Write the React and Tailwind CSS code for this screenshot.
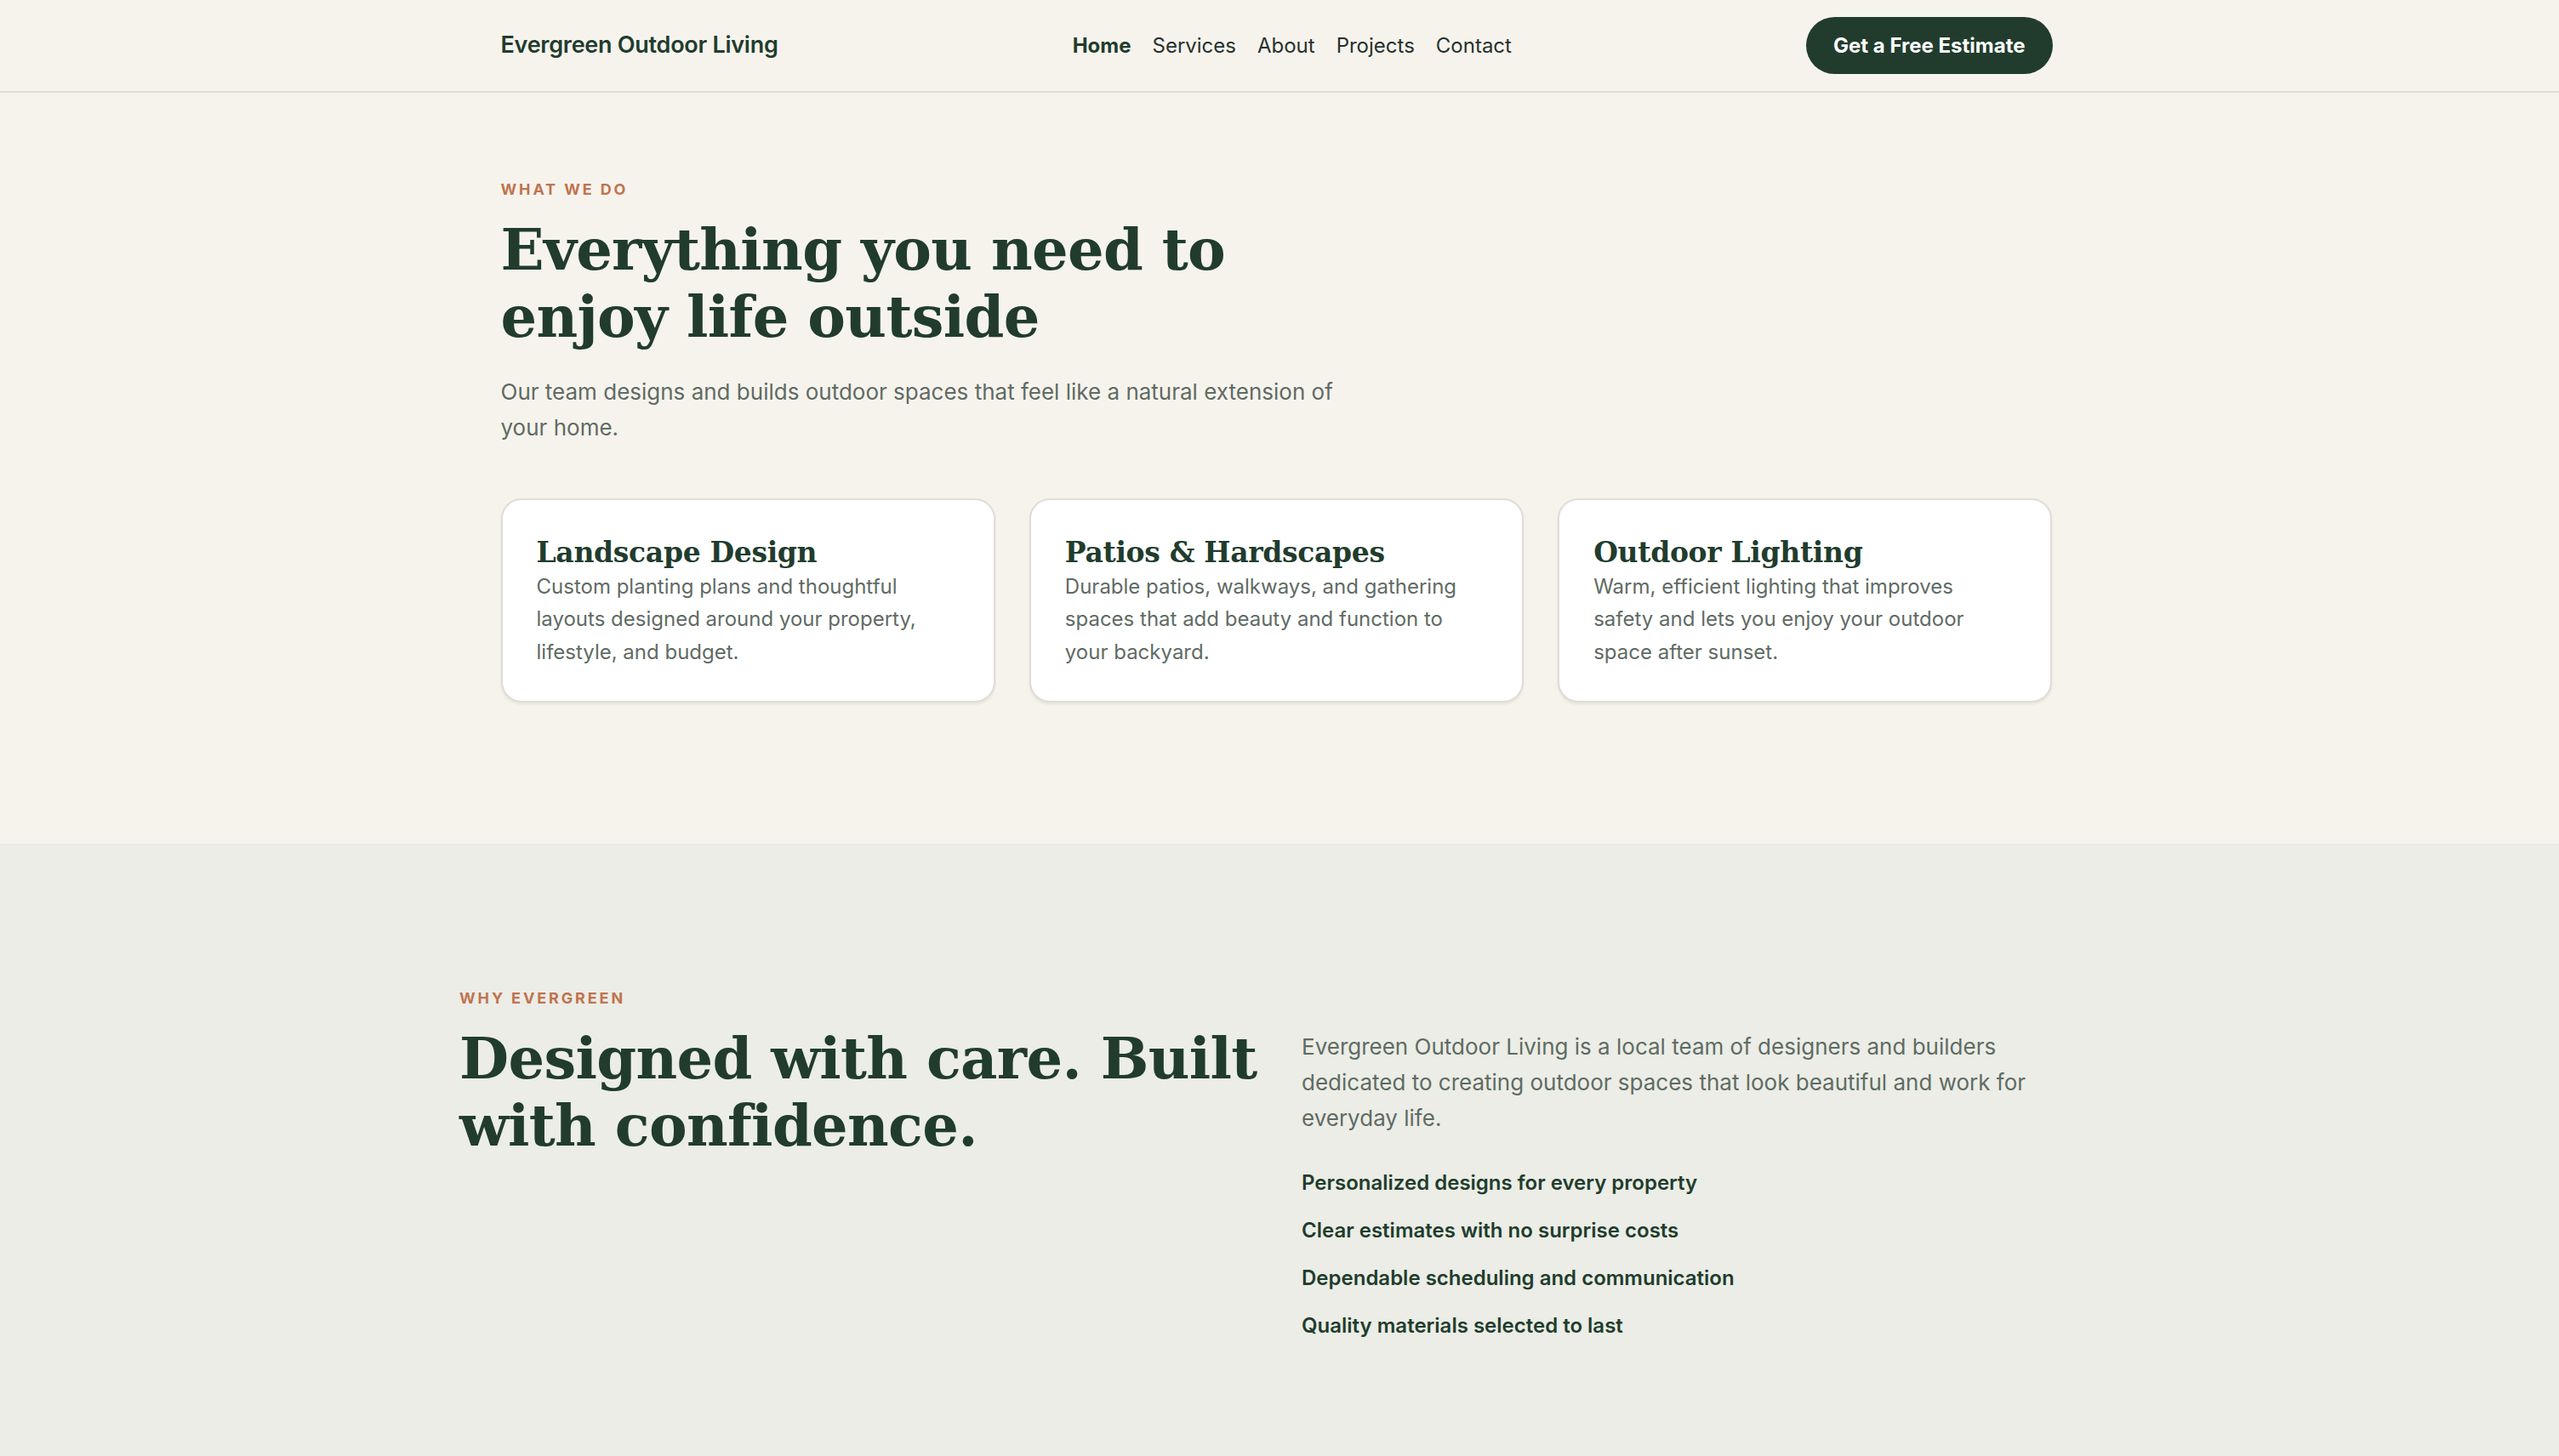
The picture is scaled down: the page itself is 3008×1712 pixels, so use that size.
import React from 'react';

const services = [
  {
    title: 'Landscape Design',
    text: 'Custom planting plans and thoughtful layouts designed around your property, lifestyle, and budget.',
  },
  {
    title: 'Patios & Hardscapes',
    text: 'Durable patios, walkways, and gathering spaces that add beauty and function to your backyard.',
  },
  {
    title: 'Outdoor Lighting',
    text: 'Warm, efficient lighting that improves safety and lets you enjoy your outdoor space after sunset.',
  },
];

const reasons = [
  'Personalized designs for every property',
  'Clear estimates with no surprise costs',
  'Dependable scheduling and communication',
  'Quality materials selected to last',
];

const navLinks = ['Home', 'Services', 'About', 'Projects', 'Contact'];

const serif = "font-['DejaVu_Serif',Georgia,serif]";

function Eyebrow({ children }) {
  return (
    <p className="text-[18px] leading-[27px] font-bold tracking-[0.16em] uppercase text-[#c0734f]">
      {children}
    </p>
  );
}

export default function App() {
  return (
    <div className="min-h-screen bg-[#f6f3ed] text-[#213c2d] font-['Inter','Liberation_Sans',sans-serif]">
      {/* Top navigation */}
      <header className="border-b-2 border-[#e0ddd6] bg-[#f6f3ed]">
        <div className="max-w-[1831px] mx-auto pr-[7px] h-[107px] flex items-center justify-between">
          <a className="text-[27px] font-semibold tracking-[-0.01em] text-[#213c2d]">Evergreen Outdoor Living</a>
          <nav className="flex items-center gap-[25px] text-[24px]">
            {navLinks.map((link, i) => (
              <a key={link} className={i === 0 ? 'font-bold text-[#213c2d]' : 'text-[#27312b]'}>
                {link}
              </a>
            ))}
          </nav>
          <button className="h-[67px] px-[32px] rounded-full bg-[#213c2d] text-white text-[24px] font-bold">
            Get a Free Estimate
          </button>
        </div>
      </header>

      {/* Services */}
      <section className="pt-[100px] pb-[166px]">
        <div className="max-w-[1831px] mx-auto pr-[7px]">
          <Eyebrow>What we do</Eyebrow>
          <h1
            className={`${serif} mt-[18px] max-w-[900px] text-[67px] leading-[79px] tracking-[-0.01em] font-bold text-[#213c2d]`}
          >
            Everything you need to enjoy life outside
          </h1>
          <p className="mt-[28px] max-w-[1040px] text-[26px] leading-[42px] text-[#5f6b64]">
            Our team designs and builds outdoor spaces that feel like a natural extension of your home.
          </p>

          <div className="mt-[62px] grid grid-cols-3 gap-[40px]">
            {services.map((s) => (
              <div
                key={s.title}
                className="bg-white border-2 border-[#dfddd6] rounded-[24px] px-[40px] pt-[40px] pb-[38px] shadow-[0_2px_3px_rgba(30,40,30,0.08)]"
              >
                <h3 className={`${serif} text-[33px] leading-[43px] tracking-[-0.01em] font-bold text-[#213c2d]`}>
                  {s.title}
                </h3>
                <p className="text-[24px] leading-[38.4px] text-[#5f6b64]">{s.text}</p>
              </div>
            ))}
          </div>
        </div>
      </section>

      {/* Why Evergreen */}
      <section className="bg-[#ebede6] pt-[168px] pb-[168px]">
        <div className="max-w-[1928px] mx-auto grid grid-cols-[950px_1fr] gap-[40px] items-start">
          <div>
            <Eyebrow>Why Evergreen</Eyebrow>
            <h2
              className={`${serif} mt-[18px] text-[67px] leading-[79px] tracking-[-0.01em] font-bold text-[#213c2d]`}
            >
              Designed with care. Built with confidence.
            </h2>
          </div>
          <div className="pt-[50px]">
            <p className="text-[26px] leading-[42px] text-[#5f6b64]">
              Evergreen Outdoor Living is a local team of designers and builders dedicated to creating outdoor
              spaces that look beautiful and work for everyday life.
            </p>
            <ul className="mt-[37px] flex flex-col gap-[20px]">
              {reasons.map((r) => (
                <li key={r} className="text-[24px] leading-[36px] font-semibold text-[#213c2d]">
                  {r}
                </li>
              ))}
            </ul>
          </div>
        </div>
      </section>
    </div>
  );
}
